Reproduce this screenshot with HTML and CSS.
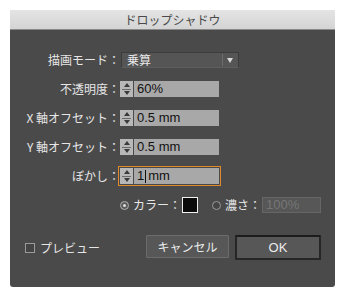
FILE: index.html
```html
<!DOCTYPE html>
<html lang="ja">
<head>
<meta charset="utf-8">
<link rel="stylesheet" href="styles.css">
</head>
<body>
<div class="dialog">
  <div class="titlebar">ドロップシャドウ</div>
  <div class="content">
    <div class="form">
      <div class="label">描画モード：</div>
      <div class="select"><span class="select-text">乗算</span><span class="select-sep"></span><span class="select-arrow"></span></div>

      <div class="label">不透明度：</div>
      <div class="numfield"><span class="spin"><i class="up"></i><i class="down"></i></span><span class="field">60%</span></div>

      <div class="label">X 軸オフセット：</div>
      <div class="numfield"><span class="spin"><i class="up"></i><i class="down"></i></span><span class="field">0.5 mm</span></div>

      <div class="label">Y 軸オフセット：</div>
      <div class="numfield"><span class="spin"><i class="up"></i><i class="down"></i></span><span class="field">0.5 mm</span></div>

      <div class="label">ぼかし：</div>
      <div class="numfield focused"><span class="spin"><i class="up"></i><i class="down"></i></span><span class="field">1<span class="caret"></span>mm</span></div>

      <div class="label"></div>
      <div class="colorrow">
        <span class="radio checked"></span><span class="rlabel">カラー：</span><span class="swatch"></span>
        <span class="radio"></span><span class="rlabel">濃さ：</span><span class="disabled-field">100%</span>
      </div>
    </div>
    <div class="footer">
      <div class="preview"><span class="checkbox"></span><span>プレビュー</span></div>
      <div class="buttons">
        <div class="btn">キャンセル</div>
        <div class="btn default">OK</div>
      </div>
    </div>
  </div>
</div>
</body>
</html>
```

FILE: styles.css
```css
html, body {
  margin: 0;
  padding: 0;
  background: #ffffff;
}
body {
  width: 344px;
  height: 296px;
  overflow: hidden;
  font-family: "Noto Sans CJK JP", "Liberation Sans", sans-serif;
  font-size: 12px;
}
.dialog {
  margin: 10px 0 0 10px;
  width: 325px;
  height: 277px;
  background: #4a4a4a;
  border-radius: 0 0 3px 3px;
  display: flex;
  flex-direction: column;
}
.titlebar {
  height: 19px;
  background: linear-gradient(#e4e4e4, #d4d4d4);
  border-bottom: 1px solid #8a8a8a;
  color: #4a4a4a;
  font-size: 12px;
  line-height: 19px;
  text-align: center;
}
.content {
  padding: 22px 0 0 0;
  display: flex;
  flex-direction: column;
}
.form {
  display: grid;
  grid-template-columns: 110px auto;
  grid-auto-rows: 16px;
  row-gap: 13px;
  column-gap: 0;
  align-items: center;
}
.label {
  color: #e6e6e6;
  text-align: right;
  font-size: 12px;
  line-height: 16px;
  white-space: nowrap;
}
.select {
  margin-left: 1px;
  width: 116px;
  height: 14px;
  background: #555555;
  border: 1px solid #3c3c3c;
  border-bottom-color: #5e5e5e;
  display: flex;
  align-items: center;
}
.select-text {
  flex: 1;
  padding-left: 5px;
  color: #e8e8e8;
  font-size: 12px;
  line-height: 14px;
}
.select-sep {
  width: 1px;
  height: 12px;
  background: #6c6c6c;
}
.select-arrow {
  width: 0;
  height: 0;
  margin: 0 5px 0 4px;
  border-left: 3.5px solid transparent;
  border-right: 3.5px solid transparent;
  border-top: 5px solid #d8d8d8;
}
.numfield {
  display: flex;
  gap: 1px;
  height: 16px;
  width: 99px;
}
.spin {
  width: 13px;
  height: 16px;
  background: #b8b8b8;
  display: flex;
  flex-direction: column;
  align-items: center;
  justify-content: space-around;
  position: relative;
}
.spin::after {
  content: "";
  position: absolute;
  left: 2px;
  right: 2px;
  top: 7.5px;
  height: 1px;
  background: #6a6a6a;
}
.spin i {
  width: 0;
  height: 0;
  border-left: 3.5px solid transparent;
  border-right: 3.5px solid transparent;
}
.spin .up { border-bottom: 4px solid #3a3a3a; }
.spin .down { border-top: 4px solid #3a3a3a; }
.field {
  flex: 1;
  background: #a8a8a8;
  color: #111111;
  font-family: "Liberation Sans", sans-serif;
  font-size: 13px;
  line-height: 16px;
  padding-left: 3px;
  display: flex;
  align-items: center;
}
.focused {
  outline: 1px solid #e08a2b;
  outline-offset: 1px;
}
.caret {
  display: inline-block;
  width: 1px;
  height: 13px;
  background: #111;
  margin: 0 2px 0 1px;
}
.colorrow {
  display: flex;
  align-items: center;
  height: 16px;
  margin-left: 0;
}
.radio {
  width: 9px;
  height: 9px;
  border-radius: 50%;
  border: 1px solid #9a9a9a;
  background: #444;
  margin: 0 4px 0 0;
  box-sizing: border-box;
  position: relative;
}
.radio.checked {
  margin-left: 0;
  border-color: #b0b0b0;
  background: #5a5a5a;
}
.radio.checked::after {
  content: "";
  position: absolute;
  left: 2px;
  top: 2px;
  width: 3px;
  height: 3px;
  border-radius: 50%;
  background: #e0e0e0;
}
.rlabel {
  color: #e6e6e6;
  font-size: 12px;
  line-height: 16px;
}
.swatch {
  width: 14px;
  height: 14px;
  background: #0a0a0a;
  border: 1px solid #f0f0f0;
  margin: 0 14px 0 1px;
}
.disabled-field {
  width: 54px;
  height: 14px;
  margin-left: 1px;
  background: #575757;
  border: 1px solid #666666;
  color: #767676;
  font-family: "Liberation Sans", sans-serif;
  font-size: 13px;
  line-height: 14px;
  padding-left: 3px;
  box-sizing: content-box;
}
.footer {
  margin-top: 22px;
  display: flex;
  align-items: center;
  justify-content: space-between;
  padding: 0 14px 0 15px;
}
.preview {
  display: flex;
  align-items: center;
  gap: 5px;
  color: #e6e6e6;
  font-size: 12px;
}
.checkbox {
  width: 8px;
  height: 8px;
  border: 1px solid #9a9a9a;
  background: #444;
}
.buttons {
  display: flex;
  gap: 6px;
}
.btn {
  width: 81px;
  height: 21px;
  border: 1px solid #6c6c6c;
  background: #575757;
  color: #ececec;
  font-size: 12px;
  line-height: 21px;
  text-align: center;
  border-radius: 1px;
}
.btn.default {
  width: 82px;
  height: 21px;
  border: 2px solid #262626;
  border-top-color: #1c1c1c;
  line-height: 21px;
  font-family: "Liberation Sans", sans-serif;
  font-size: 13px;
}
```
